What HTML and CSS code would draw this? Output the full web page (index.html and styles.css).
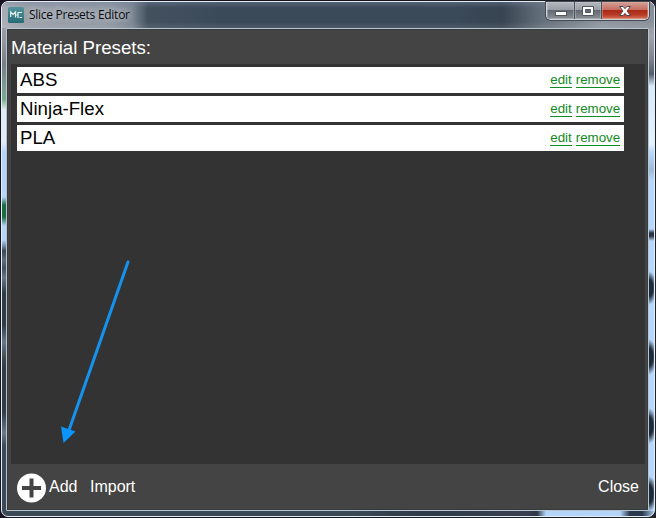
FILE: index.html
```html
<!DOCTYPE html>
<html lang="en">
<head>
<meta charset="utf-8">
<title>Slice Presets Editor</title>
<link rel="stylesheet" href="styles.css">
</head>
<body>
<div class="window">
  <header class="titlebar">
    <div class="title">
      <svg class="logo" width="16" height="16" viewBox="0 0 16 16">
        <defs><linearGradient id="teal" x2="0" y2="1"><stop stop-color="#55959e"/><stop offset="1" stop-color="#246b75"/></linearGradient></defs>
        <rect width="16" height="16" rx="1.5" fill="url(#teal)"/>
        <path d="M2.700 10V5l2.400 2.500L7.500 5v5.500M14 5.500h-4M10 5v6M8 8h2M11.500 10.500H14" fill="none" stroke="#e3f1ef" stroke-width="1.200"/>
      </svg>
      <span class="caption">Slice Presets Editor</span>
    </div>
    <div class="controls">
      <button class="control" aria-label="Minimize"><svg width="12" height="12"><rect x=".5" y="6.500" width="11" height="4" fill="#fff" stroke="#535762"/></svg></button>
      <button class="control" aria-label="Maximize"><svg width="12" height="12"><path d="M.5 1.500h11v9H.5zM3.500 4.500v3h5v-3z" fill="#fff" fill-rule="evenodd" stroke="#535762"/></svg></button>
      <button class="control control-close" aria-label="Close window"><svg width="12" height="12"><path d="M.5 1.500h3.700L6 3.700l1.800-2.200h3.700L8 6l3.500 4.500H7.800L6 8.300l-1.800 2.200H.5L4 6z" fill="#fff" stroke="#5c4549"/></svg></button>
    </div>
  </header>
  <main class="client">
    <h1 class="heading">Material Presets:</h1>
    <ul class="presets">
      <li class="preset"><span>ABS</span><span class="links"><a>edit</a><a>remove</a></span></li>
      <li class="preset"><span>Ninja-Flex</span><span class="links"><a>edit</a><a>remove</a></span></li>
      <li class="preset"><span>PLA</span><span class="links"><a>edit</a><a>remove</a></span></li>
    </ul>
    <footer class="actions">
      <svg width="30" height="30" viewBox="0 0 30 30"><circle cx="14.500" cy="15" r="14.500" fill="#fff"/><path d="M14.500 5.500v19M5 15h19" stroke="#444" stroke-width="4"/></svg>
      <span class="add">Add</span>
      <span class="import">Import</span>
      <span class="close">Close</span>
    </footer>
  </main>
</div>
<svg class="arrow" width="80" height="190" viewBox="0 0 80 190"><path d="M73 7L13 178" stroke="#1591ee" stroke-width="3" stroke-linecap="round"/><path d="M6 171.500L20.500 176.500L8.500 188z" fill="#0b94fb"/></svg>
</body>
</html>
```
FILE: styles.css
```css
* { box-sizing: border-box; }

body {
  margin: 0;
  height: 518px;
  padding: 1px;
  overflow: hidden;
  background: linear-gradient(90deg, #17131f, #121219 50%, #202329);
  font-family: "Liberation Sans", Arial, sans-serif;
}

.window {
  display: flex;
  flex-direction: column;
  height: 516px;
  padding: 0 5px 5px 4px;
  border: 1px solid #e3edf4;
  border-radius: 7px;
  background:
    linear-gradient(90deg, #3b4856 0 350px, #2f3947 420px, #384052 525px, #303746 535px, #b4d5fa 544px 618px, #29384a 628px 640px, #a5c5e7 652px) 0 100% / 100% 5px no-repeat,
    linear-gradient(#a7acb4 0, #92969f 40px, #777e86 62px, #7e9c91 85px, #74aa8b 97px, #e3ecf4 108px, #e4edf6 140px, #b5d5fb 150px 195px, #1c6b42 203px 215px, #b5d5fb 224px 238px, #3b4654 249px, #5e6c7c 258px, #435061 266px, #657687 276px, #313b48 291px 323px, #67788a 340px, #40484c 357px, #323c49 365px 410px, #697a8c 431px, #3d4957 444px) 0 0 / 5px 100% no-repeat,
    radial-gradient(8px 17px at 647px 286px, #1f2b39 50%, #1f2b3900),
    radial-gradient(8px 18px at 647px 355px, #1f2b39 50%, #1f2b3900),
    radial-gradient(8px 18px at 647px 424px, #1f2b39 50%, #1f2b3900),
    radial-gradient(8px 18px at 647px 492px, #1f2b39 50%, #1f2b3900),
    linear-gradient(#8b929c 0, #a0a4ac 35px, #7b828b 58px, #535b65 72px, #d7e9fb 84px, #e6f2ff 142px, #b7d8fc 150px, #9ebad8 168px, #b7d8fc 179px 227px, #293544 231px 234px, #b7d8fc 239px) 100% 0 / 6px 100% no-repeat,
    #3b4856;
}

.titlebar {
  display: flex;
  flex: 0 0 26px;
  justify-content: space-between;
  margin: 0 -5px 0 -4px;
  padding: 0 5px 0 6px;
  border-radius: 6px 6px 0 0;
  background:
    linear-gradient(#7887a566, transparent 6px 20px, #ffffff18),
    linear-gradient(90deg, #aaafb7 0, #9a9fa8 25px, #8c959f 110px, #7b8692 130px, #43515f 146px, #3b4a59 220px 450px, #374451 500px, #65707c 540px, #8f969f 600px, #8a9099 100%);
}

.title { display: flex; align-items: center; gap: 5px; }
.logo { display: block; }

.caption {
  font: 12px/16px "Open Sans", "Noto Sans", sans-serif;
  letter-spacing: -.27px;
  white-space: nowrap;
  color: #080a0e;
  text-shadow: 0 0 6px #d2d6dc, 0 0 10px #c1c6ce;
}

.controls {
  display: flex;
  align-self: flex-start;
  height: 18px;
  border: 1px solid #d1d5da;
  border-top: 0;
  border-radius: 0 0 5px 5px;
  box-shadow: 0 0 0 1px #424953;
  overflow: hidden;
}

.control {
  display: flex;
  align-items: center;
  justify-content: center;
  width: 28px;
  padding: 0;
  border: 0;
  border-right: 1px solid #4c525b;
  background: linear-gradient(#b4b8be, #989da5 48%, #626973 50%, #8b9097);
  box-shadow: inset 0 0 0 1px #c7cbd166;
}

.control:nth-child(2) { width: 27px; }

.control-close {
  width: 46px;
  border: 0;
  background: linear-gradient(#d3a19a, #c46a5c 48%, #aa2c18 50%, #b83923 75%, #d5775f);
  box-shadow: inset 0 0 0 1px #e6b6a866;
}

.client {
  display: flex;
  flex: 1;
  flex-direction: column;
  padding: 0 3px 0 4px;
  border: 1px solid #b8c5ce;
  border-radius: 1px;
  background: #444;
  box-shadow: inset 0 0 0 1px #353c3e;
  color: #fff;
}

.heading {
  flex: 0 0 35px;
  margin: 0;
  padding-top: 8px;
  font-size: 18.67px;
  font-weight: 400;
  line-height: 22px;
}

.presets {
  display: flex;
  flex: 0 0 400px;
  flex-direction: column;
  gap: 3px;
  margin: 0;
  padding: 3px 21px 0 6px;
  background: #333;
  list-style: none;
}

.preset {
  display: flex;
  align-items: center;
  justify-content: space-between;
  height: 26px;
  padding: 0 3px;
  background: #fff;
  color: #000;
  font-size: 18.67px;
  line-height: 22px;
}

.links {
  display: flex;
  gap: 4px;
  margin-right: .8px;
  color: #118b24;
  font-size: 13.33px;
  line-height: 14px;
}

.links a { height: 15px; border-bottom: 1px solid #118b24; }

.actions {
  display: flex;
  flex: 1;
  align-items: center;
  padding: 2px 6px 0;
  font-size: 16px;
  line-height: 20px;
}

.actions span { position: relative; top: -1px; }
.add { margin-left: 2px; }
.import { margin-left: 12.5px; }
.close { margin-left: auto; }

.arrow {
  position: absolute;
  top: 255px;
  left: 55px;
  pointer-events: none;
}
```
